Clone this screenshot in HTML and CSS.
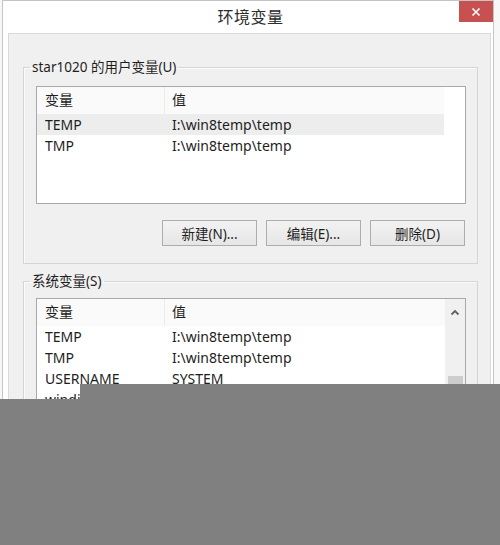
FILE: index.html
```html
<!DOCTYPE html>
<html lang="zh-CN">
<head>
<meta charset="utf-8">
<title>环境变量</title>
<link rel="stylesheet" href="styles.css">
</head>
<body>
<div class="window">
  <div class="titlebar">
    <span></span>
    <div class="title">环境变量</div>
    <div class="close">
      <svg width="10" height="10" viewBox="0 0 10 10"><path d="M1.5 1.5 L8.5 8.5 M8.5 1.5 L1.5 8.5" stroke="#fff" stroke-width="1.6" fill="none"/></svg>
    </div>
  </div>
  <div class="content">
    <fieldset class="group first">
      <legend>star1020 的用户变量(U)</legend>
      <div class="list short">
        <div class="rows">
          <div class="row head"><span class="c1">变量</span><span class="c2">值</span></div>
          <div class="row sel"><span class="c1">TEMP</span><span class="c2">I:\win8temp\temp</span></div>
          <div class="row"><span class="c1">TMP</span><span class="c2">I:\win8temp\temp</span></div>
        </div>
        <div class="spacer"></div>
      </div>
      <div class="buttons">
        <button class="btn">新建(N)...</button>
        <button class="btn">编辑(E)...</button>
        <button class="btn">删除(D)</button>
      </div>
    </fieldset>
    <fieldset class="group second">
      <legend>系统变量(S)</legend>
      <div class="list tall">
        <div class="rows">
          <div class="row head"><span class="c1">变量</span><span class="c2">值</span></div>
          <div class="row"><span class="c1">TEMP</span><span class="c2">I:\win8temp\temp</span></div>
          <div class="row"><span class="c1">TMP</span><span class="c2">I:\win8temp\temp</span></div>
          <div class="row"><span class="c1">USERNAME</span><span class="c2">SYSTEM</span></div>
          <div class="row"><span class="c1">windir</span><span class="c2">%SystemRoot%</span></div>
        </div>
        <div class="scrollbar">
          <div class="arrow">
            <svg width="10" height="7" viewBox="0 0 10 7"><path d="M1.5 5.5 L5 2 L8.5 5.5" stroke="#606060" stroke-width="1.8" fill="none"/></svg>
          </div>
          <div class="thumb"></div>
        </div>
      </div>
    </fieldset>
  </div>
</div>
<div class="mask-top"></div>
<div class="mask-bottom"></div>
</body>
</html>
```
FILE: styles.css
```css
html, body {
  margin: 0;
  padding: 0;
}
body {
  background: #f7f7f7;
  font-family: "Noto Sans", "Noto Sans CJK SC", sans-serif;
  font-size: 14px;
  color: #1e1e1e;
  width: 500px;
  height: 545px;
  overflow: hidden;
  position: relative;
}
.window {
  margin-left: 2px;
  width: 492px;
  height: 545px;
  border: 1px solid #c4c4c4;
  border-bottom: 0;
  background: #fff;
  padding: 0 2px 0 5px;
  box-sizing: border-box;
  display: flex;
  flex-direction: column;
}
.titlebar {
  margin: 0 -2px 0 -5px;
  padding-left: 5px;
  height: 32px;
  flex: none;
  display: grid;
  grid-template-columns: 1fr auto 1fr;
}
.title {
  font-size: 16px;
  line-height: 32px;
  color: #2b2b2b;
  letter-spacing: 0.5px;
}
.close {
  justify-self: end;
  width: 34px;
  height: 21px;
  background: #c75050;
  display: flex;
  align-items: center;
  justify-content: center;
}
.close svg {
  display: block;
}
.content {
  flex: 1;
  min-height: 0;
  overflow: hidden;
  background: #f0f0f0;
  border: 1px solid #dadada;
  border-bottom: 0;
  padding-top: 24px;
  box-sizing: border-box;
}
.group {
  margin: 0 12px 0 14px;
  padding: 0 11px 17px 12px;
  border: 1px solid #d5d5d5;
  box-shadow: inset 1px 1px 0 #fbfbfb;
  min-width: 0;
}
.group.second {
  margin-top: 8px;
}
.group legend {
  margin-left: -6px;
  padding: 0 2px;
  line-height: 18px;
  font-size: 13.5px;
  color: #1e1e1e;
}
.list {
  margin-top: 10px;
  border: 1px solid #a9a9a9;
  background: #fff;
  display: flex;
  box-sizing: border-box;
}
.second .list {
  margin-top: 8px;
}
.list.short {
  height: 118px;
}
.list.tall {
  height: 140px;
}
.rows {
  flex: 1;
  min-width: 0;
}
.row {
  display: flex;
  height: 21px;
  line-height: 21px;
  white-space: nowrap;
}
.row.head {
  height: 27px;
  line-height: 26px;
  background: #fafafa;
}
.row.sel {
  background: #ededed;
}
.c1 {
  width: 128px;
  padding-left: 8px;
  box-sizing: border-box;
}
.head .c1 {
  border-right: 1px solid #ececec;
}
.c2 {
  padding-left: 7px;
}
.spacer {
  width: 21px;
}
.scrollbar {
  width: 20px;
  background: #f0f0f0;
  display: flex;
  flex-direction: column;
  align-items: center;
}
.arrow {
  height: 26px;
  display: flex;
  align-items: center;
  justify-content: center;
}
.arrow svg {
  display: block;
}
.thumb {
  margin-top: 51px;
  width: 15px;
  height: 40px;
  background: #cdcdcd;
}
.buttons {
  margin-top: 16px;
  display: flex;
  justify-content: flex-end;
  gap: 9px;
  padding-right: 1px;
}
.btn {
  width: 95px;
  height: 26px;
  border: 1px solid #adadad;
  background: linear-gradient(#f2f2f2, #e6e6e6);
  font-family: "Noto Sans", "Noto Sans CJK SC", sans-serif;
  font-size: 13.5px;
  color: #1e1e1e;
  padding: 0;
}
.mask-top {
  position: absolute;
  left: 80px;
  top: 384px;
  right: 0;
  height: 16px;
  background: #808080;
}
.mask-bottom {
  position: absolute;
  left: 0;
  top: 399px;
  right: 0;
  bottom: 0;
  background: #808080;
}
```
